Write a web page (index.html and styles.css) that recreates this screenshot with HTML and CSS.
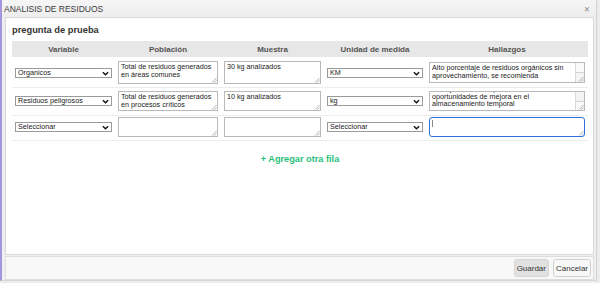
FILE: index.html
```html
<!DOCTYPE html>
<html lang="es">
<head>
<meta charset="utf-8">
<title>Analisis de residuos</title>
<link rel="stylesheet" href="styles.css">
</head>
<body>
<div class="dialog">
  <div class="titlebar">
    <span class="title">ANALISIS DE RESIDUOS</span>
    <span class="close">&#x2715;</span>
  </div>
  <div class="content">
    <h2 class="question">pregunta de prueba</h2>
    <table class="grid">
      <colgroup>
        <col class="c1"><col class="c2"><col class="c3"><col class="c4"><col class="c5">
      </colgroup>
      <thead>
        <tr><th>Variable</th><th>Población</th><th>Muestra</th><th>Unidad de medida</th><th>Hallazgos</th></tr>
      </thead>
      <tbody>
        <tr class="r1">
          <td><span class="sel"><select><option>Organicos</option></select><svg class="chev" viewBox="0 0 8 5" width="7" height="5"><path d="M1 1 L4 4 L7 1" fill="none" stroke="#111" stroke-width="1.6"/></svg></span></td>
          <td><span class="ta"><textarea class="h23">Total de residuos generados en áreas comunes</textarea><svg class="grip" viewBox="0 0 6 6" width="6" height="6"><path d="M5.5 1 L1 5.5 M5.5 3.5 L3.5 5.5" stroke="#999" stroke-width="0.8"/></svg></span></td>
          <td><span class="ta"><textarea class="h23">30 kg analizados</textarea><svg class="grip" viewBox="0 0 6 6" width="6" height="6"><path d="M5.5 1 L1 5.5 M5.5 3.5 L3.5 5.5" stroke="#999" stroke-width="0.8"/></svg></span></td>
          <td><span class="sel"><select><option>KM</option></select><svg class="chev" viewBox="0 0 8 5" width="7" height="5"><path d="M1 1 L4 4 L7 1" fill="none" stroke="#111" stroke-width="1.6"/></svg></span></td>
          <td><span class="ta"><textarea class="h21 long">Alto porcentaje de residuos orgánicos sin aprovechamiento, se recomienda implementación de programas de compostaje y separación en la fuente.</textarea><span class="sbar"><span class="thumb top"></span></span><svg class="grip" viewBox="0 0 6 6" width="6" height="6"><path d="M5.5 1 L1 5.5 M5.5 3.5 L3.5 5.5" stroke="#999" stroke-width="0.8"/></svg></span></td>
        </tr>
        <tr class="r2">
          <td><span class="sel"><select><option>Residuos peligrosos</option></select><svg class="chev" viewBox="0 0 8 5" width="7" height="5"><path d="M1 1 L4 4 L7 1" fill="none" stroke="#111" stroke-width="1.6"/></svg></span></td>
          <td><span class="ta"><textarea class="h20">Total de residuos generados en procesos críticos</textarea><svg class="grip" viewBox="0 0 6 6" width="6" height="6"><path d="M5.5 1 L1 5.5 M5.5 3.5 L3.5 5.5" stroke="#999" stroke-width="0.8"/></svg></span></td>
          <td><span class="ta"><textarea class="h20">10 kg analizados</textarea><svg class="grip" viewBox="0 0 6 6" width="6" height="6"><path d="M5.5 1 L1 5.5 M5.5 3.5 L3.5 5.5" stroke="#999" stroke-width="0.8"/></svg></span></td>
          <td><span class="sel"><select><option>kg</option></select><svg class="chev" viewBox="0 0 8 5" width="7" height="5"><path d="M1 1 L4 4 L7 1" fill="none" stroke="#111" stroke-width="1.6"/></svg></span></td>
          <td><span class="ta"><textarea class="h20 long scrolled">Se observa en términos generales un
manejo adecuado, pero se evidencian oportunidades de mejora en el almacenamiento temporal</textarea><span class="sbar"><span class="thumb bottom"></span></span><svg class="grip" viewBox="0 0 6 6" width="6" height="6"><path d="M5.5 1 L1 5.5 M5.5 3.5 L3.5 5.5" stroke="#999" stroke-width="0.8"/></svg></span></td>
        </tr>
        <tr class="r3">
          <td><span class="sel"><select><option>Seleccionar</option></select><svg class="chev" viewBox="0 0 8 5" width="7" height="5"><path d="M1 1 L4 4 L7 1" fill="none" stroke="#111" stroke-width="1.6"/></svg></span></td>
          <td><span class="ta"><textarea class="h20"></textarea><svg class="grip" viewBox="0 0 6 6" width="6" height="6"><path d="M5.5 1 L1 5.5 M5.5 3.5 L3.5 5.5" stroke="#999" stroke-width="0.8"/></svg></span></td>
          <td><span class="ta"><textarea class="h20"></textarea><svg class="grip" viewBox="0 0 6 6" width="6" height="6"><path d="M5.5 1 L1 5.5 M5.5 3.5 L3.5 5.5" stroke="#999" stroke-width="0.8"/></svg></span></td>
          <td><span class="sel"><select><option>Seleccionar</option></select><svg class="chev" viewBox="0 0 8 5" width="7" height="5"><path d="M1 1 L4 4 L7 1" fill="none" stroke="#111" stroke-width="1.6"/></svg></span></td>
          <td><span class="ta"><textarea class="h20 focused"></textarea><span class="caret"></span><svg class="grip" viewBox="0 0 6 6" width="6" height="6"><path d="M5.5 1 L1 5.5 M5.5 3.5 L3.5 5.5" stroke="#999" stroke-width="0.8"/></svg></span></td>
        </tr>
      </tbody>
    </table>
    <div class="addrow"><a class="add">+ Agregar otra fila</a></div>
  </div>
  <div class="footer">
    <button class="btn primary">Guardar</button>
    <button class="btn">Cancelar</button>
  </div>
</div>
<script src="script.js"></script>
</body>
</html>
```

FILE: styles.css
```css
* { box-sizing: border-box; }
html, body { margin: 0; padding: 0; }
body {
  width: 600px;
  height: 283px;
  background: #ececec;
  font-family: "Liberation Sans", Arial, sans-serif;
  overflow: hidden;
}
.dialog {
  width: 597px;
  height: 281px;
  border-left: 2px solid #a396de;
  border-right: 1px solid #d2d2d2;
  border-bottom: 1px solid #d6d6d6;
  background: #efefef;
  display: flex;
  flex-direction: column;
}
.titlebar {
  height: 17px;
  flex: none;
  display: flex;
  align-items: center;
  justify-content: space-between;
  padding: 0 6px 0 2px;
  background: linear-gradient(#f6f6f6, #ededed);
}
.title {
  font-size: 8.5px;
  color: #3a3a3a;
}
.close {
  font-size: 7.5px;
  color: #888;
  font-family: "DejaVu Sans", sans-serif;
  padding-top: 1px;
}
.content {
  flex: none;
  height: 238px;
  margin: 0 2px 0 3px;
  background: #fff;
  border: 1px solid #d9d9d9;
  padding: 6px 5px 0 6px;
}
.question {
  margin: 0 0 5px 0;
  font-size: 9.3px;
  font-weight: bold;
  color: #333;
  line-height: 12px;
  height: 12px;
}
.grid {
  width: 576px;
  border-collapse: collapse;
  table-layout: fixed;
}
.c1 { width: 103px; }
.c2 { width: 106px; }
.c3 { width: 103px; }
.c4 { width: 102px; }
.c5 { width: 162px; }
.grid th {
  background: #e7e7e7;
  color: #555;
  font-size: 8px;
  font-weight: bold;
  height: 16px;
  padding: 0;
  text-align: center;
  vertical-align: middle;
}
.grid td {
  padding: 3px 3px;
  border-bottom: 1px solid #ececec;
  vertical-align: middle;
}
.r1 td { padding-top: 4px; padding-bottom: 3px; }
.r2 td { padding-top: 3px; padding-bottom: 4px; }
.r3 td { padding-top: 1px; padding-bottom: 3px; }
.ta {
  position: relative;
  display: block;
}
textarea {
  display: block;
  width: 100%;
  margin: 0;
  border: 1px solid #b9b9b9;
  border-radius: 0;
  padding: 1px 2px;
  font-family: "Liberation Sans", Arial, sans-serif;
  font-size: 7.2px;
  line-height: 8.3px;
  color: #222;
  resize: none;
  background: #fff;
  outline: none;
  overflow: hidden;
}
.h23 { height: 23px; }
.h21 { height: 21px; }
.h20 { height: 20px; }
textarea.long { padding-right: 12px; }
textarea.scrolled { line-height: 7.4px; padding-bottom: 2px; }
textarea.focused {
  border: 1.5px solid #2f6fdc;
  border-radius: 3px;
}
.grip {
  position: absolute;
  right: 1px;
  bottom: 1px;
  pointer-events: none;
}
.sbar {
  position: absolute;
  top: 1px;
  right: 1px;
  bottom: 1px;
  width: 9px;
  background: #f4f4f4;
  border-left: 1px solid #dadada;
}
.thumb {
  position: absolute;
  left: 0;
  right: 0;
  height: 50%;
  background: #f9f9f9;
  border-bottom: 1px solid #d4d4d4;
}
.thumb.top { top: 0; }
.thumb.bottom { bottom: 0; border-bottom: none; border-top: 1px solid #d4d4d4; }
.caret {
  position: absolute;
  left: 3px;
  top: 3px;
  width: 1px;
  height: 7px;
  background: #888;
}
.sel {
  position: relative;
  display: block;
}
.sel select {
  display: block;
  width: 100%;
  height: 10px;
  margin: 0;
  padding: 0 0 0 2px;
  border: 1px solid #9a9a9a;
  border-radius: 0;
  background: #fff;
  -webkit-appearance: none;
  appearance: none;
  font-family: "Liberation Sans", Arial, sans-serif;
  font-size: 7.2px;
  line-height: 8px;
  color: #222;
}
.chev {
  position: absolute;
  right: 3px;
  top: 3px;
  pointer-events: none;
}
.addrow {
  text-align: center;
  padding-top: 7px;
}
.add {
  font-size: 9.2px;
  font-weight: bold;
  color: #2bbf7d;
}
.footer {
  flex: none;
  height: 24px;
  margin: 1px 2px 0 3px;
  background: #f8f8f8;
  border: 1px solid #dedede;
  display: flex;
  justify-content: flex-end;
  align-items: center;
  gap: 4px;
  padding-right: 2px;
}
.btn {
  height: 18px;
  padding: 0 2px;
  font-family: "Liberation Sans", Arial, sans-serif;
  font-size: 8px;
  color: #333;
  background: #f8f8f8;
  border: 1px solid #d0d0d0;
  border-radius: 3px;
}
.btn.primary {
  background: #e1e1e1;
  border-color: #d6d6d6;
}
```

FILE: script.js
```js
document.querySelectorAll('textarea.scrolled').forEach(function (t) {
  t.scrollTop = t.scrollHeight;
});
```
